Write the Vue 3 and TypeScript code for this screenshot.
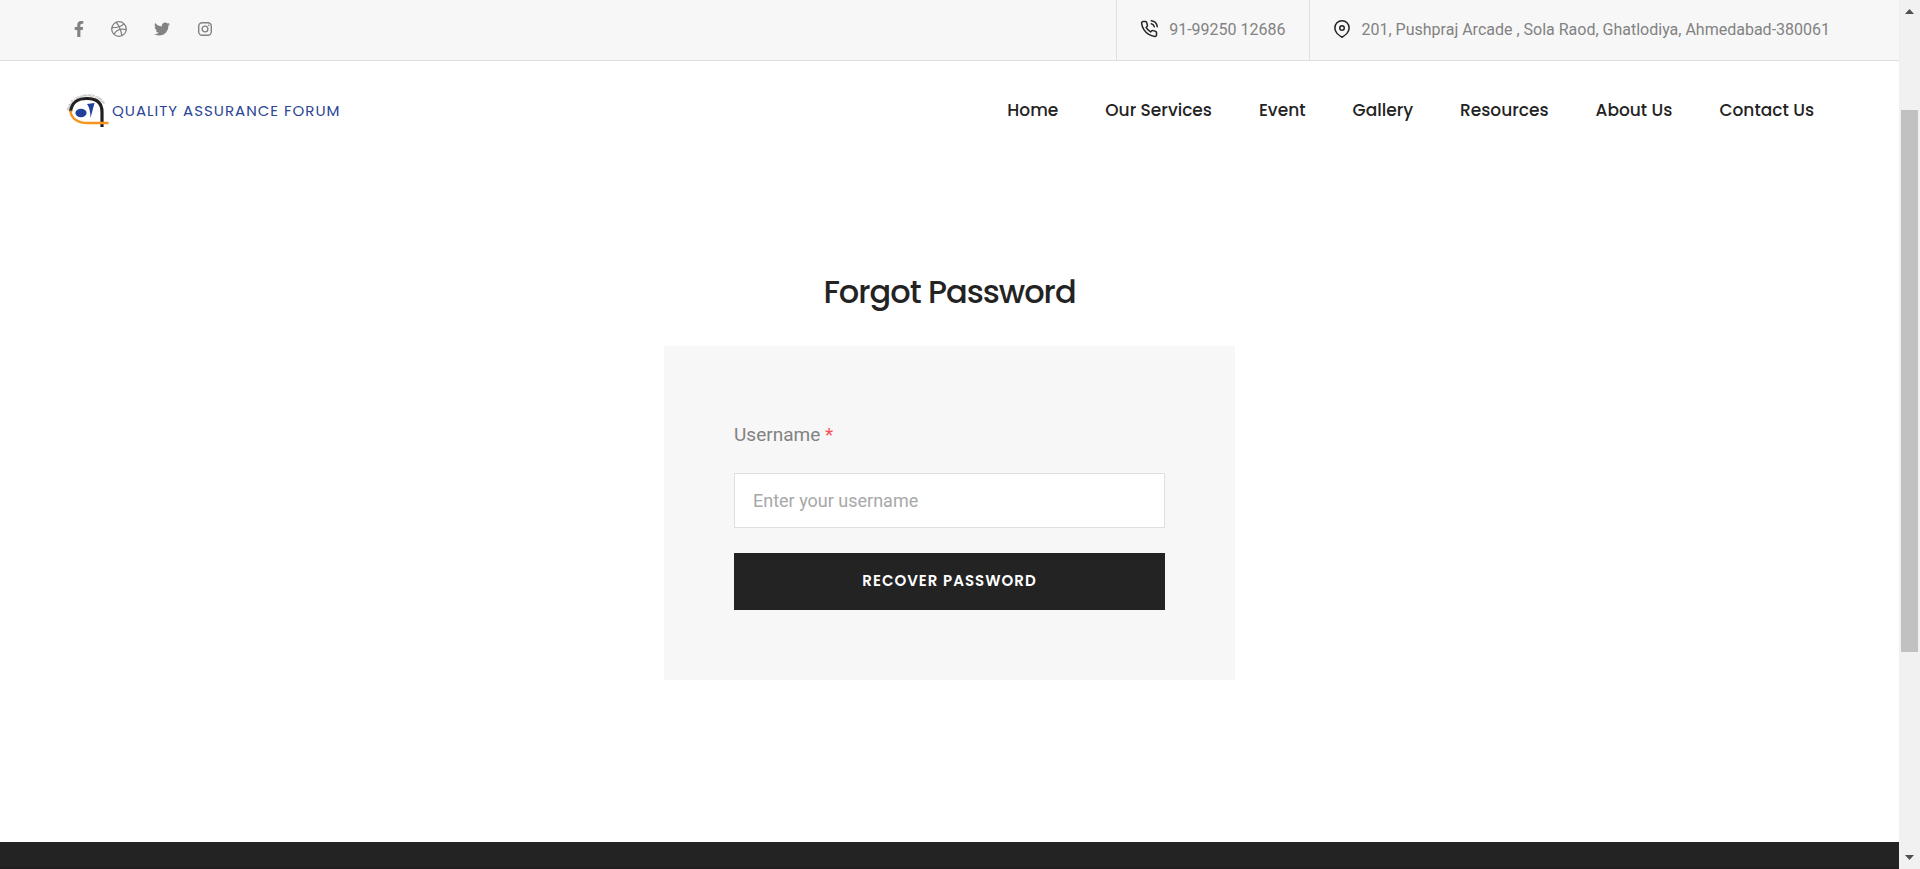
<script setup lang="ts">
import { ref } from 'vue'

interface NavLink {
  label: string
  href: string
}

const links: NavLink[] = [
  { label: 'Home', href: '#home' },
  { label: 'Our Services', href: '#services' },
  { label: 'Event', href: '#event' },
  { label: 'Gallery', href: '#gallery' },
  { label: 'Resources', href: '#resources' },
  { label: 'About Us', href: '#about' },
  { label: 'Contact Us', href: '#contact' },
]

const username = ref<string>('')
</script>

<template>
  <div class="window">
    <div class="page">
      <div class="topbar">
        <div class="social">
          <a href="#facebook" aria-label="Facebook">
            <svg width="10" height="16" viewBox="0 0 320 512" fill="currentColor">
              <path d="M279.14 288l14.22-92.66h-88.91v-60.13c0-25.35 12.42-50.06 52.24-50.06h40.42V6.26S260.43 0 225.36 0c-73.22 0-121.08 44.38-121.08 124.72v70.62H22.89V288h81.39v224h100.17V288z" />
            </svg>
          </a>
          <a href="#dribbble" aria-label="Dribbble">
            <svg width="16" height="16" viewBox="0 0 16 16" fill="none" stroke="currentColor" stroke-width="1.3">
              <circle cx="8" cy="8" r="7.3" />
              <path d="M5.3 1.3C8 4.700 10 9 10.900 14.600M.8 6.700C5.500 6.800 10 6 13 2.900M3 13.300C5 9.300 9.500 7.200 15.200 8.600" />
            </svg>
          </a>
          <a href="#twitter" aria-label="Twitter">
            <svg width="16" height="16" viewBox="0 0 512 512" fill="currentColor">
              <path d="M459.37 151.716c.325 4.548.325 9.097.325 13.645 0 138.72-105.583 298.558-298.558 298.558-59.452 0-114.68-17.219-161.137-47.106 8.447.974 16.568 1.299 25.34 1.299 49.055 0 94.213-16.568 130.274-44.832-46.132-.975-84.792-31.188-98.112-72.772 6.498.974 12.995 1.624 19.818 1.624 9.421 0 18.843-1.3 27.614-3.573-48.081-9.747-84.143-51.98-84.143-102.985v-1.299c13.969 7.797 30.214 12.67 47.431 13.319-28.264-18.843-46.781-51.005-46.781-87.391 0-19.492 5.197-37.36 14.294-52.954 51.655 63.675 129.3 105.258 216.365 109.807-1.624-7.797-2.599-15.918-2.599-24.04 0-57.828 46.782-104.934 104.934-104.934 30.213 0 57.502 12.67 76.67 33.137 23.715-4.548 46.456-13.32 66.599-25.34-7.798 24.366-24.366 44.833-46.132 57.827 21.117-2.273 41.584-8.122 60.426-16.243-14.292 20.791-32.161 39.308-52.628 54.253z" />
            </svg>
          </a>
          <a href="#instagram" aria-label="Instagram">
            <svg width="16" height="16" viewBox="0 0 16 16" fill="none" stroke="currentColor" stroke-width="1.4">
              <rect x="1.700" y="1.700" width="12.600" height="12.600" rx="3.500" />
              <circle cx="8" cy="8" r="2.900" />
              <circle cx="11.700" cy="4.300" r=".8" fill="currentColor" stroke="none" />
            </svg>
          </a>
        </div>
        <div class="contacts">
          <a class="contact" href="tel:+919925012686">
            <svg class="contact-icon" viewBox="0 0 24 24">
              <path d="M15.050 5A5 5 0 0 1 19 8.950M15.050 1A9 9 0 0 1 23 8.940m-1 7.980v3a2 2 0 0 1-2.180 2 19.790 19.790 0 0 1-8.630-3.070 19.500 19.500 0 0 1-6-6 19.790 19.790 0 0 1-3.070-8.670A2 2 0 0 1 4.110 2h3a2 2 0 0 1 2 1.720 12.840 12.840 0 0 0 .7 2.810 2 2 0 0 1-.45 2.110L8.090 9.910a16 16 0 0 0 6 6l1.270-1.270a2 2 0 0 1 2.110-.45 12.840 12.840 0 0 0 2.810.7A2 2 0 0 1 22 16.920z" />
            </svg>
            <span>91-99250 12686</span>
          </a>
          <div class="contact">
            <svg class="contact-icon" viewBox="0 0 24 24">
              <path d="M21.500 10.500c0 7-9.500 12.500-9.500 12.500s-9.500-5.500-9.500-12.500a9.500 9.500 0 0 1 19 0z" />
              <circle cx="12" cy="10.500" r="3" />
            </svg>
            <span>201, Pushpraj Arcade , Sola Raod, Ghatlodiya, Ahmedabad-380061</span>
          </div>
        </div>
      </div>

      <header class="header">
        <a class="logo" href="#home">
          <svg width="46" height="42" viewBox="0 -4 46 42" fill="none" aria-hidden="true">
            <path id="arch" d="M3.500 21C3 -2 41 -3 41.500 21" />
            <text class="logo-arch"><textPath href="#arch" startOffset="6%">QUALITY ASSURANCE FORUM</textPath></text>
            <path d="M5.500 18.500C7 8.500 13 5.500 22 5.500C33 5.500 37 11 37 19V34" stroke="#231f20" stroke-width="3.200" />
            <path d="M5.500 17.500C5.500 26 14 30 23 30H43.500" stroke="#f7941d" stroke-width="2.400" />
            <ellipse cx="16" cy="20" rx="5.600" ry="4.200" fill="#21409a" />
            <path d="M22 11L29.500 10L25.500 25C25.500 19 24.500 14.500 22 11Z" fill="#21409a" />
          </svg>
          <span class="logo-name">QUALITY ASSURANCE FORUM</span>
        </a>
        <nav class="nav">
          <a v-for="link in links" :key="link.label" :href="link.href">{{ link.label }}</a>
        </nav>
      </header>

      <main class="main">
        <h1>Forgot Password</h1>
        <form class="card" @submit.prevent>
          <label for="username">Username <span class="required">*</span></label>
          <input id="username" v-model="username" type="text" placeholder="Enter your username" required />
          <button type="submit">RECOVER PASSWORD</button>
        </form>
      </main>

      <footer class="footer"></footer>
    </div>

    <div class="scrollbar" aria-hidden="true">
      <svg width="9" height="5" viewBox="0 0 9 5"><path d="M0 5L4.500 0L9 5Z" fill="#505050" /></svg>
      <div class="track"><div class="thumb"></div></div>
      <svg width="9" height="5" viewBox="0 0 9 5"><path d="M0 0L4.500 5L9 0Z" fill="#505050" /></svg>
    </div>
  </div>
</template>

<style>
body {
  margin: 0;
}
</style>

<style scoped>
.window {
  display: flex;
  min-height: 100vh;
  background: #fff;
  color: #828282;
  font-family: Roboto, sans-serif;
}

.window *,
.window {
  box-sizing: border-box;
}

a {
  color: inherit;
  text-decoration: none;
}

svg {
  display: block;
  flex: none;
}

.page {
  display: flex;
  flex: 1;
  flex-direction: column;
  min-width: 0;
}

.topbar {
  display: flex;
  justify-content: space-between;
  height: 61px;
  padding: 0 69px 0 74px;
  border-bottom: 1px solid #dfdfdf;
  background: #f7f7f7;
  font-size: 16px;
}

.social {
  display: flex;
  align-items: center;
  gap: 27px;
  padding-bottom: 2px;
}

.contacts {
  display: flex;
}

.contact {
  display: flex;
  align-items: center;
  gap: 11px;
  padding: 0 23px 2px;
  border-left: 1px solid #dfdfdf;
}

.contact:last-child {
  padding-right: 0;
}

.contact-icon {
  width: 18px;
  height: 18px;
  fill: none;
  stroke: #232323;
  stroke-width: 2;
  stroke-linecap: round;
  stroke-linejoin: round;
}

.header {
  display: flex;
  align-items: center;
  justify-content: space-between;
  height: 98px;
  padding: 0 85px 0 65px;
}

.logo {
  display: flex;
  align-items: center;
  gap: 1px;
}

.logo-arch {
  fill: #666;
  font-family: "Liberation Sans", sans-serif;
  font-size: 3px;
}

.logo-name {
  color: #2b4594;
  font-family: Poppins, Inter, sans-serif;
  font-size: 15px;
  font-weight: 400;
  letter-spacing: 1px;
}

.nav {
  display: flex;
  gap: 47px;
  color: #232323;
  font-family: Poppins, Inter, sans-serif;
  font-size: 17px;
  font-weight: 500;
}

.main {
  flex: 1;
  width: 571px;
  max-width: 100%;
  margin: 0 auto;
  padding: 108px 0 162px;
}

h1 {
  margin: 0 0 29px;
  color: #232323;
  font-family: Poppins, Inter, sans-serif;
  font-size: 32px;
  font-weight: 500;
  letter-spacing: -1px;
  line-height: 50px;
  text-align: center;
}

.card {
  display: flex;
  flex-direction: column;
  padding: 70px;
  background: #f7f7f7;
}

label {
  margin-bottom: 20px;
  font-size: 19px;
  line-height: 37px;
}

.required {
  color: #fb4f58;
}

input {
  height: 55px;
  margin-bottom: 25px;
  padding: 0 18px;
  border: 1px solid #dfdfdf;
  border-radius: 0;
  outline: 0;
  background: #fff;
  color: #828282;
  font: 18px Roboto, sans-serif;
}

input::placeholder {
  color: #a8a8a8;
  opacity: 1;
}

button {
  height: 57px;
  padding: 0 0 2px;
  border: 0;
  background: #232323;
  color: #fff;
  font: 600 15px Poppins, Inter, sans-serif;
  letter-spacing: 1px;
}

.footer {
  height: 27px;
  border-bottom: 2px solid #231f20;
  background: #232323;
}

.scrollbar {
  display: flex;
  flex: none;
  flex-direction: column;
  align-items: center;
  gap: 7px;
  width: 21px;
  padding: 9px 2px;
  background: #f1f1f1;
}

.track {
  display: grid;
  flex: 1;
  grid-template-rows: 89fr 542fr 196fr;
  align-self: stretch;
}

.thumb {
  grid-row: 2;
  background: #c1c1c1;
}
</style>
